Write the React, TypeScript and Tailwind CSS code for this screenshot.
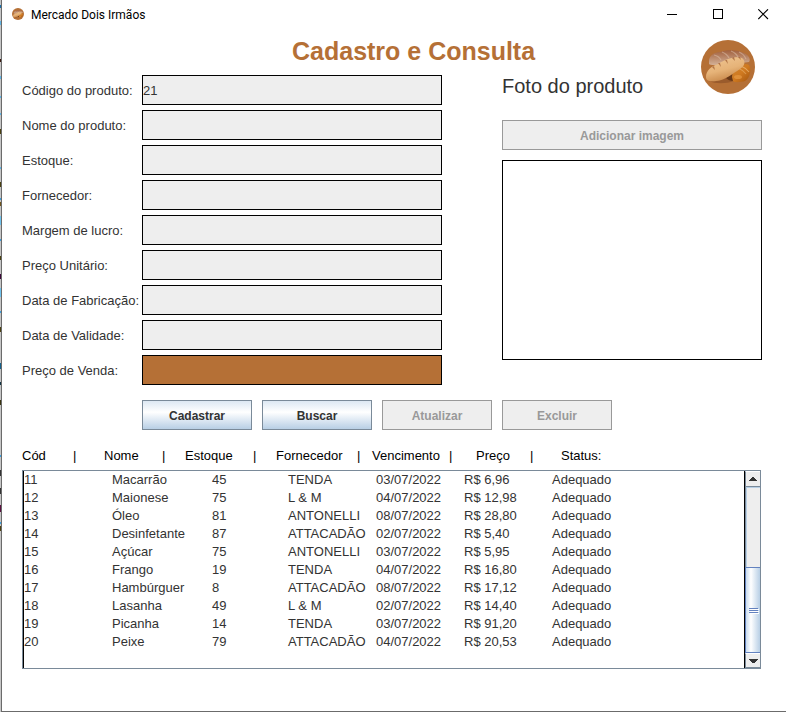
import React from "react";

type Field = { id: string; label: string; value?: string; highlight?: boolean };

const fields: Field[] = [
  { id: "codigo", label: "Código do produto:", value: "21" },
  { id: "nome", label: "Nome do produto:" },
  { id: "estoque", label: "Estoque:" },
  { id: "fornecedor", label: "Fornecedor:" },
  { id: "margem", label: "Margem de lucro:" },
  { id: "unitario", label: "Preço Unitário:" },
  { id: "fabricacao", label: "Data de Fabricação:" },
  { id: "validade", label: "Data de Validade:" },
  { id: "venda", label: "Preço de Venda:", highlight: true },
];

const products = [
  ["11", "Macarrão", "45", "TENDA", "03/07/2022", "R$ 6,96", "Adequado"],
  ["12", "Maionese", "75", "L & M", "04/07/2022", "R$ 12,98", "Adequado"],
  ["13", "Óleo", "81", "ANTONELLI", "08/07/2022", "R$ 28,80", "Adequado"],
  ["14", "Desinfetante", "87", "ATTACADÃO", "02/07/2022", "R$ 5,40", "Adequado"],
  ["15", "Açúcar", "75", "ANTONELLI", "03/07/2022", "R$ 5,95", "Adequado"],
  ["16", "Frango", "19", "TENDA", "04/07/2022", "R$ 16,80", "Adequado"],
  ["17", "Hambúrguer", "8", "ATTACADÃO", "08/07/2022", "R$ 17,12", "Adequado"],
  ["18", "Lasanha", "49", "L & M", "02/07/2022", "R$ 14,40", "Adequado"],
  ["19", "Picanha", "14", "TENDA", "03/07/2022", "R$ 91,20", "Adequado"],
  ["20", "Peixe", "79", "ATTACADÃO", "04/07/2022", "R$ 20,53", "Adequado"],
];

const headings = [
  { text: "Cód", width: "w-[51px]" },
  { text: "|", width: "w-[31px]" },
  { text: "Nome", width: "w-[58px]" },
  { text: "|", width: "w-[23px]" },
  { text: "Estoque", width: "w-[68px]" },
  { text: "|", width: "w-[23px]" },
  { text: "Fornecedor", width: "w-[81px]" },
  { text: "|", width: "w-[15px]" },
  { text: "Vencimento", width: "w-[77px]" },
  { text: "|", width: "w-[27px]" },
  { text: "Preço", width: "w-[54px]" },
  { text: "|", width: "w-[31px]" },
  { text: "Status:", width: "w-12" },
];

const specks: [number, number, string][] = [
  [5, 3, "#1c6fa8"], [21, 4, "#5fb4e5"], [59, 3, "#3a1a10"], [76, 3, "#5fb4e5"], [96, 2, "#5fb4e5"],
  [113, 2, "#5fb4e5"], [129, 5, "#4a4010"], [167, 2, "#5fb4e5"], [182, 5, "#4a4010"], [198, 2, "#3f9fdc"],
  [202, 4, "#70551c"], [216, 9, "#6fc3ee"], [239, 2, "#3f9fdc"], [256, 4, "#4a4010"], [274, 5, "#3b0738"],
  [288, 9, "#6fc3ee"], [311, 2, "#3f9fdc"], [327, 5, "#4a4010"], [363, 6, "#15618c"], [382, 3, "#123344"],
  [400, 5, "#3a3510"], [455, 2, "#3f9fdc"], [470, 6, "#333333"], [488, 6, "#333333"], [505, 7, "#5a1040"],
  [522, 2, "#3f9fdc"], [526, 5, "#4a4010"],
];

function Bread({ className }: { className: string }) {
  return (
    <svg viewBox="0 0 54 54" className={className} aria-hidden="true">
      <defs>
        <linearGradient id="loaf" x1="0" y1="0" x2="0.4" y2="1">
          <stop offset="0" stopColor="#f0c795" />
          <stop offset="0.6" stopColor="#e6b378" />
          <stop offset="1" stopColor="#c98a4c" />
        </linearGradient>
        <linearGradient id="rustic" x1="0" y1="0" x2="0" y2="1">
          <stop offset="0" stopColor="#a2613f" />
          <stop offset="1" stopColor="#d3b096" />
        </linearGradient>
        <linearGradient id="bun" x1="0" y1="0" x2="1" y2="1">
          <stop offset="0" stopColor="#cc822f" />
          <stop offset="0.5" stopColor="#d07a20" />
          <stop offset="1" stopColor="#a2540e" />
        </linearGradient>
      </defs>
      <circle cx="27" cy="27" r="27" fill="#b57036" />
      <path d="M8 41 C18 43 25 36 31 36 L33 41 C25 44 14 44 8 41Z" fill="#9a5b2c" />
      <path d="M25 38 L31 31 L33 41 C29 41 27 40 25 38Z" fill="#683816" />
      <path d="M8 21 C8 16 13 12 19 12 C26 9 38 10 43 13 C48 15 50 20 48 22 C43 23 36 22 28 23 C19 25 10 26 8 24Z" fill="url(#rustic)" />
      <path d="M13 15 Q18 16 20 20 M21 12 Q26 14 28 18 M30 11 Q35 13 37 17 M38 12 Q43 14 45 19" stroke="#dcc0aa" strokeWidth="1.2" fill="none" opacity="0.55" />
      <path d="M31 37 C31 31 37 25 45 24 C49 24 50 29 49 33 C48 37 47 39 44 41 C40 42 34 43 32 41Z" fill="url(#bun)" />
      <path d="M40 26 Q45 28 48 32" stroke="#efbd7c" strokeWidth="1.1" fill="none" opacity="0.7" />
      <path d="M37 28 Q42 30 45 34" stroke="#efbd7c" strokeWidth="1.1" fill="none" opacity="0.5" />
      <ellipse cx="37" cy="37" rx="4" ry="2" fill="#e59a44" opacity="0.7" />
      <path d="M5 37 C5 31 10 26 17 24 C25 19 35 16 41 18 C45 21 44 26 39 29 C31 34 25 40 15 41 C9 42 5 41 5 37Z" fill="url(#loaf)" />
      <path d="M11 27 L14 30 L13 26Z M17 23 L20 27 L19 23Z M24 20 L27 24 L26 20Z M31 18 L34 21 L33 17Z M37 17 L40 20 L39 17Z" fill="#a05e33" opacity="0.75" />
    </svg>
  );
}

function TitleBar() {
  const control = "flex h-7 items-center justify-center";
  return (
    <div className="flex h-[30px] items-start pl-2.5">
      <div className="flex h-7 flex-1 items-center gap-[7px]">
        <Bread className="size-3" />
        <span className="pt-0.5 font-[Roboto,'Open_Sans',sans-serif] text-[12px] leading-4 text-black">
          Mercado Dois Irmãos
        </span>
      </div>
      <button type="button" aria-label="Minimizar" className={`${control} w-[46px]`}>
        <svg viewBox="0 0 11 11" className="size-[11px]" shapeRendering="crispEdges">
          <path d="M0 5.5H10" stroke="#000" />
        </svg>
      </button>
      <button type="button" aria-label="Maximizar" className={`${control} w-[46px]`}>
        <svg viewBox="0 0 11 11" className="size-[11px]" shapeRendering="crispEdges">
          <rect x="0.5" y="0.5" width="9" height="9" fill="none" stroke="#000" />
        </svg>
      </button>
      <button type="button" aria-label="Fechar" className={`${control} w-[45px]`}>
        <svg viewBox="0 0 11 11" className="size-[11px]">
          <path d="M0.3 0.3L10 10M10 0.3L0.3 10" stroke="#000" strokeWidth="1.1" />
        </svg>
      </button>
    </div>
  );
}

function ActionButton({ label, disabled }: { label: string; disabled?: boolean }) {
  return (
    <button
      type="button"
      disabled={disabled}
      className="h-[30px] w-[110px] border border-[#7a8a99] bg-linear-to-b from-[#dde8f3] via-white via-40% to-[#b8cfe5] pt-0.5 text-[12px] font-bold text-[#333333] disabled:border-[#999999] disabled:bg-[#eeeeee] disabled:bg-none disabled:text-[#999999]"
    >
      {label}
    </button>
  );
}

function ScrollBar() {
  const arrow = "flex shrink-0 items-center justify-center border-t border-l border-white bg-[#eeeeee]";
  const grip = "h-px w-[9px] bg-[#6382bf] shadow-[1px_1px_0_#ffffff]";
  return (
    <div className="flex w-[15px] shrink-0 flex-col">
      <button
        type="button"
        aria-label="Rolar para cima"
        className={`${arrow} h-4 border-b border-b-[#7a8a99] border-l-[#7a8a99]`}
      >
        <svg viewBox="0 0 8 4" className="h-1 w-2" shapeRendering="crispEdges">
          <path d="M3 0H5V1H6V2H7V3H8V4H0V3H1V2H2V1H3Z" fill="#333" />
        </svg>
      </button>
      <div className="flex flex-1 border-l border-[#7a8a99]">
        <div className="flex-1 border-t border-l border-[#b8cfe5] bg-[#eeeeee]" />
      </div>
      <div className="flex h-[86px] shrink-0 flex-col items-center justify-center gap-px border-y border-l border-[#6382bf] bg-linear-to-r from-[#c8dbee] via-white via-35% to-[#b8cfe5]">
        <span className={grip} />
        <span className={grip} />
        <span className={grip} />
      </div>
      <button
        type="button"
        aria-label="Rolar para baixo"
        className={`${arrow} h-[15px] border-b border-b-[#7a8a99] border-l-[#7a8a99]`}
      >
        <svg viewBox="0 0 9 4" className="h-1 w-[9px]" shapeRendering="crispEdges">
          <path d="M0 0H9V1H8V2H7V3H6V4H3V3H2V2H1V1H0Z" fill="#333" />
        </svg>
      </button>
    </div>
  );
}

export default function App() {
  return (
    <div className="flex min-h-screen bg-[#c6c6c6] font-['Liberation_Sans',Arial,sans-serif] text-[13px] leading-[18px] text-[#333333]">
      <svg className="w-px shrink-0" height="700" aria-hidden="true" shapeRendering="crispEdges">
        {specks.map(([y, h, color]) => (
          <rect key={y} x="0" y={y} width="1" height={h} fill={color} />
        ))}
      </svg>
      <div className="flex flex-1 flex-col border-b border-l border-[#6b6b6b] bg-white">
        <TitleBar />
        <main className="flex flex-col pr-6 pl-5">
          <header className="flex h-[45px] items-start justify-between pl-[270px]">
            <h1 className="pt-1.5 text-[25px] leading-[30px] font-bold text-[#b57036]">Cadastro e Consulta</h1>
            <Bread className="mt-2.5 mr-[7px] size-[54px] shrink-0" />
          </header>

          <div className="flex gap-[60px]">
            <form className="flex w-[420px] flex-col gap-[5px]">
              {fields.map((f) => (
                <div key={f.id} className="flex items-center">
                  <label htmlFor={f.id} className="w-[120px] pt-0.5 whitespace-nowrap">
                    {f.label}
                  </label>
                  <input
                    id={f.id}
                    type="text"
                    readOnly
                    defaultValue={f.value}
                    className={`h-[30px] min-w-0 flex-1 border border-black ${f.highlight ? "bg-[#b57036]" : "bg-[#eeeeee]"}`}
                  />
                </div>
              ))}
            </form>
            <section className="flex flex-1 flex-col">
              <h2 className="h-[45px] text-[20px] leading-[22px]">Foto do produto</h2>
              <button
                type="button"
                disabled
                className="h-[30px] border border-[#999999] bg-[#eeeeee] pt-0.5 text-[12px] font-bold text-[#999999]"
              >
                Adicionar imagem
              </button>
              <div className="mt-2.5 h-[200px] border border-black bg-white" />
            </section>
          </div>

          <div className="mt-[15px] flex gap-2.5 pl-[120px]">
            <ActionButton label="Cadastrar" />
            <ActionButton label="Buscar" />
            <ActionButton label="Atualizar" disabled />
            <ActionButton label="Excluir" disabled />
          </div>

          <div className="mt-[17px] flex pb-[5px] text-black">
            {headings.map((h, i) => (
              <span key={i} className={`${h.width} shrink-0 whitespace-nowrap`}>
                {h.text}
              </span>
            ))}
          </div>

          <div className="mr-px flex h-[199px] border border-[#7a8a99]">
            <div className="flex-1 border-x border-black">
              <table className="w-full table-fixed border-collapse text-left whitespace-nowrap" aria-label="Produtos">
                <colgroup>
                  <col className="w-[88px]" />
                  <col className="w-[100px]" />
                  <col className="w-[76px]" />
                  <col className="w-[88px]" />
                  <col className="w-[88px]" />
                  <col className="w-[88px]" />
                  <col />
                </colgroup>
                <tbody>
                  {products.map((row) => (
                    <tr key={row[0]} className="h-[18px]">
                      {row.map((cell, i) => (
                        <td key={i} className="p-0">
                          {cell}
                        </td>
                      ))}
                    </tr>
                  ))}
                </tbody>
              </table>
            </div>
            <ScrollBar />
          </div>
        </main>
      </div>
    </div>
  );
}
